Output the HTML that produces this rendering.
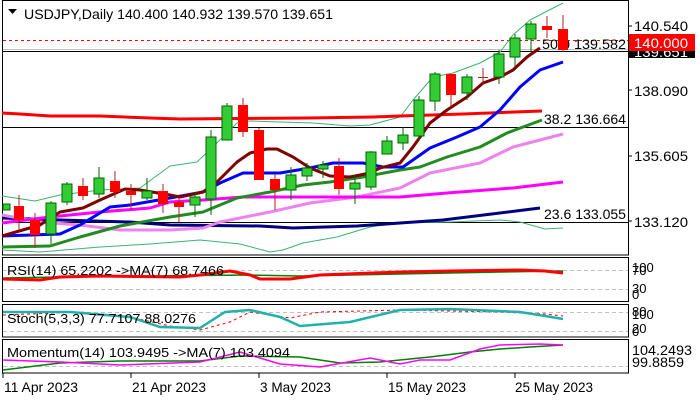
<!DOCTYPE html>
<html><head><meta charset="utf-8"><style>
html,body{margin:0;padding:0;background:#fff;}
svg{display:block;font-family:"Liberation Sans",sans-serif;}
</style></head><body>
<svg width="700" height="400" viewBox="0 0 700 400" xmlns="http://www.w3.org/2000/svg">
<rect width="700" height="400" fill="#fff"/>
<g fill="none" stroke="#000" stroke-width="1">
<rect x="2.5" y="0.5" width="626" height="254.5"/>
<rect x="2.5" y="257.5" width="626" height="44"/>
<rect x="2.5" y="304.5" width="626" height="32.5"/>
<rect x="2.5" y="339.5" width="626" height="33.5"/>
</g>
<path d="M8 9 L17 9 L12.5 14 Z" fill="#000"/>
<text x="24" y="19" font-size="14" fill="#000" textLength="309" lengthAdjust="spacingAndGlyphs">USDJPY,Daily  140.400 140.932 139.570 139.651</text>
<line x1="3" y1="40.5" x2="628" y2="40.5" stroke="#f00" stroke-dasharray="3,3"/>
<line x1="3" y1="49.5" x2="628" y2="49.5" stroke="#c0c0c0"/>
<line x1="3" y1="51.5" x2="628" y2="51.5" stroke="#000"/>
<line x1="3" y1="127.5" x2="628" y2="127.5" stroke="#000"/>
<line x1="3" y1="222.5" x2="628" y2="222.5" stroke="#000"/>
<g font-size="14" fill="#000">
<text x="542" y="49" textLength="84" lengthAdjust="spacingAndGlyphs">50.0 139.582</text>
<text x="544" y="124" textLength="82" lengthAdjust="spacingAndGlyphs">38.2 136.664</text>
<text x="544" y="219" textLength="82" lengthAdjust="spacingAndGlyphs">23.6 133.055</text>
</g>
<g fill="none" stroke-linejoin="round">
<polyline stroke="#3cb371" stroke-width="1" points="2,196 35,201 60,195 100,190 140,188 170,166 197,162 223,137 237,123 250,121 280,122 313,123 350,126 370,125 400,117 413,100 433,77 453,73 480,63 500,52 513,35 530,20 563,3"/>
<polyline stroke="#3cb371" stroke-width="1" points="2,250 40,252 100,247 150,244 200,240 240,244 270,252 283,250 303,243 337,237 370,227 400,223 450,222 500,220 520,222 545,229 563,228"/>
<polyline stroke="#f00" stroke-width="3" points="2,113 20,114 50,116 100,116 150,118 180,119 307,118 373,117 400,116 463,114 542,111"/>
<polyline stroke="#000080" stroke-width="3" points="2,218 60,220 130,222 170,225 260,226 293,228 357,226 400,223 443,220 540,208"/>
<polyline stroke="#ee82ee" stroke-width="3" points="2,215 40,222 80,225 120,230 170,230 203,228 220,222 270,212 310,203 357,197 400,188 430,173 480,163 513,147 563,134"/>
<polyline stroke="#f0f" stroke-width="3" points="2,223 50,217 100,212 150,208 170,202 203,200 243,197 400,197 447,193 513,188 563,182"/>
<polyline stroke="#228b22" stroke-width="3" points="2,247 50,246 80,237 120,226 170,217 203,212 237,198 270,192 303,185 330,182 363,177 400,170 420,167 447,157 480,147 507,133 523,127 542,120"/>
<polyline stroke="#00f" stroke-width="3" points="2,236 60,234 80,225 110,207 130,205 170,198 203,192 220,183 243,173 280,173 310,168 333,163 363,163 383,167 403,167 430,148 457,137 480,127 500,110 520,87 540,70 563,62"/>
<polyline stroke="#800000" stroke-width="3" points="2,236 40,225 60,212 83,208 100,200 125,189 140,190 170,195 180,197 203,192 217,182 237,162 250,153 267,149 277,149 293,157 310,168 330,176 350,177 370,173 380,168 400,163 413,147 430,123 447,110 467,97 483,83 500,77 513,70 527,57 540,48"/>
</g>
<g stroke-width="1">
<g stroke="#006400" fill="#32cd32">
<rect x="3" y="204" width="7" height="6"/>
<line x1="51" y1="201" x2="51" y2="244"/><rect x="46" y="203" width="10" height="31"/>
<line x1="67" y1="182" x2="67" y2="205"/><rect x="62" y="184" width="10" height="18"/>
<line x1="99" y1="167" x2="99" y2="198"/><rect x="94" y="178" width="10" height="16"/>
<line x1="147" y1="178" x2="147" y2="200"/><rect x="142" y="191" width="10" height="7"/>
<line x1="195" y1="192" x2="195" y2="217"/><rect x="190" y="197" width="10" height="8"/>
<line x1="211" y1="130" x2="211" y2="215"/><rect x="206" y="137" width="10" height="62"/>
<line x1="227" y1="103" x2="227" y2="140"/><rect x="222" y="106" width="10" height="34"/>
<line x1="291" y1="167" x2="291" y2="200"/><rect x="286" y="175" width="10" height="15"/>
<line x1="307" y1="163" x2="307" y2="181"/><rect x="302" y="168" width="10" height="8"/>
<line x1="323" y1="161" x2="323" y2="178"/><rect x="318" y="165" width="10" height="4"/>
<line x1="355" y1="175" x2="355" y2="204"/><rect x="350" y="183" width="10" height="6"/>
<line x1="371" y1="151" x2="371" y2="190"/><rect x="366" y="152" width="10" height="35"/>
<line x1="387" y1="136" x2="387" y2="154"/><rect x="382" y="141" width="10" height="13"/>
<line x1="403" y1="127" x2="403" y2="150"/><rect x="398" y="135" width="10" height="8"/>
<line x1="419" y1="96" x2="419" y2="140"/><rect x="414" y="100" width="10" height="36"/>
<line x1="435" y1="72" x2="435" y2="111"/><rect x="430" y="74" width="10" height="27"/>
<line x1="467" y1="74" x2="467" y2="100"/><rect x="462" y="77" width="10" height="16"/>
<line x1="499" y1="50" x2="499" y2="84"/><rect x="494" y="54" width="10" height="23"/>
<line x1="515" y1="34" x2="515" y2="67"/><rect x="510" y="38" width="10" height="19"/>
<line x1="531" y1="21" x2="531" y2="52"/><rect x="526" y="24" width="10" height="15"/>
</g>
<g stroke="#b22222" fill="#f00">
<line x1="19" y1="195" x2="19" y2="230"/><rect x="14" y="206" width="10" height="14" stroke="none"/>
<line x1="35" y1="213" x2="35" y2="248"/><rect x="30" y="220" width="10" height="15" stroke="none"/>
<line x1="83" y1="178" x2="83" y2="200"/><rect x="78" y="186" width="10" height="10" stroke="none"/>
<line x1="115" y1="171" x2="115" y2="198"/><rect x="110" y="181" width="10" height="11" stroke="none"/>
<line x1="131" y1="184" x2="131" y2="210"/><rect x="126" y="191" width="10" height="4" stroke="none"/>
<line x1="163" y1="184" x2="163" y2="213"/><rect x="158" y="191" width="10" height="13" stroke="none"/>
<line x1="179" y1="198" x2="179" y2="222"/><rect x="174" y="202" width="10" height="5" stroke="none"/>
<line x1="243" y1="98" x2="243" y2="137"/><rect x="238" y="105" width="10" height="27" stroke="none"/>
<line x1="259" y1="128" x2="259" y2="180"/><rect x="254" y="130" width="10" height="50" stroke="none"/>
<line x1="275" y1="174" x2="275" y2="210"/><rect x="270" y="179" width="10" height="11" stroke="none"/>
<line x1="339" y1="158" x2="339" y2="195"/><rect x="334" y="166" width="10" height="23" stroke="none"/>
<line x1="451" y1="74" x2="451" y2="107"/><rect x="446" y="74" width="10" height="21" stroke="none"/>
<line x1="483" y1="68" x2="483" y2="85"/><line x1="478" y1="77.5" x2="488" y2="77.5"/>
<line x1="547" y1="16" x2="547" y2="38"/><rect x="542" y="26" width="10" height="4" stroke="none"/>
<line x1="563" y1="15" x2="563" y2="52"/><rect x="558" y="29" width="10" height="21" stroke="none"/>
</g>
</g>
<g font-size="14" fill="#000">
<line x1="628" y1="26" x2="632" y2="26" stroke="#000"/>
<text x="634" y="31" textLength="54" lengthAdjust="spacingAndGlyphs">140.540</text>
<line x1="628" y1="90" x2="632" y2="90" stroke="#000"/>
<text x="634" y="96" textLength="54" lengthAdjust="spacingAndGlyphs">138.090</text>
<line x1="628" y1="156" x2="632" y2="156" stroke="#000"/>
<text x="634" y="161" textLength="54" lengthAdjust="spacingAndGlyphs">135.605</text>
<line x1="628" y1="221" x2="632" y2="221" stroke="#000"/>
<text x="634" y="227" textLength="54" lengthAdjust="spacingAndGlyphs">133.120</text>
</g>
<rect x="629" y="44" width="66" height="14" fill="#000"/>
<text x="634" y="57" font-size="14" fill="#fff" textLength="54" lengthAdjust="spacingAndGlyphs">139.651</text>
<rect x="629" y="34" width="66" height="17" fill="#f00"/>
<text x="634" y="48" font-size="14" fill="#fff" textLength="54" lengthAdjust="spacingAndGlyphs">140.000</text>
<g stroke="#c0c0c0" stroke-dasharray="4,3">
<line x1="3" y1="270.5" x2="628" y2="270.5"/>
<line x1="3" y1="289.5" x2="628" y2="289.5"/>
<line x1="3" y1="312.5" x2="628" y2="312.5"/>
<line x1="3" y1="331.5" x2="628" y2="331.5"/>
<line x1="3" y1="366.5" x2="628" y2="366.5"/>
</g>
<polyline fill="none" stroke="#008000" stroke-width="1.5" points="3,278 60,277 150,276 250,275 300,276 400,274 500,272 563,271"/>
<polyline fill="none" stroke="#f00" stroke-width="3" points="3,279 40,280 60,277 100,276 180,277 200,275 230,271 250,275 260,279 290,279 320,275 400,272 450,271 520,270 545,271 563,273"/>
<text x="7" y="275" font-size="13" fill="#000" textLength="217" lengthAdjust="spacingAndGlyphs">RSI(14) 65.2202  -&gt;MA(7) 68.7466</text>
<polyline fill="none" stroke="#f00" stroke-width="1" stroke-dasharray="3,3" points="3,315 80,312 130,317 170,326 200,330 230,322 250,312 290,318 320,312 400,310 500,312 545,314 563,316"/>
<polyline fill="none" stroke="#20b2aa" stroke-width="2.5" points="3,312 70,312 130,317 160,327 200,328 225,312 250,310 280,317 300,326 350,322 400,310 450,309 520,312 545,316 563,319"/>
<text x="7" y="323" font-size="13" fill="#000" textLength="189" lengthAdjust="spacingAndGlyphs">Stoch(5,3,3) 77.7107 88.0276</text>
<polyline fill="none" stroke="#008000" stroke-width="1.5" points="3,370 60,363 120,361 200,361 240,356 300,357 340,363 380,362 430,357 470,352 500,349 530,347 563,345"/>
<polyline fill="none" stroke="#f0f" stroke-width="1.5" points="3,360 60,362 120,365 200,362 240,352 280,364 320,367 370,358 400,364 420,360 450,360 480,349 500,345 540,344 563,345"/>
<text x="7" y="357" font-size="13" fill="#000" textLength="283" lengthAdjust="spacingAndGlyphs">Momentum(14) 103.9495  -&gt;MA(7) 103.4094</text>
<g font-size="13" fill="#000">
<text x="632" y="272">100</text><text x="632" y="275">70</text>
<text x="632" y="293">30</text><text x="632" y="299">0</text>
<text x="632" y="316">80</text><text x="632" y="319">100</text>
<text x="632" y="333">20</text><text x="632" y="336">0</text>
<text x="632" y="355" font-size="14" textLength="60" lengthAdjust="spacingAndGlyphs">104.2493</text>
<text x="632" y="367" font-size="14" textLength="52" lengthAdjust="spacingAndGlyphs">99.8859</text>
</g>
<g stroke="#000">
<line x1="3" y1="373" x2="3" y2="378"/><line x1="131" y1="373" x2="131" y2="378"/>
<line x1="259" y1="373" x2="259" y2="378"/><line x1="387" y1="373" x2="387" y2="378"/>
<line x1="515" y1="373" x2="515" y2="378"/>
</g>
<g font-size="14" fill="#000">
<text x="4" y="392" textLength="74" lengthAdjust="spacingAndGlyphs">11 Apr 2023</text>
<text x="132" y="392" textLength="74" lengthAdjust="spacingAndGlyphs">21 Apr 2023</text>
<text x="260" y="392" textLength="71" lengthAdjust="spacingAndGlyphs">3 May 2023</text>
<text x="388" y="392" textLength="78" lengthAdjust="spacingAndGlyphs">15 May 2023</text>
<text x="515" y="392" textLength="78" lengthAdjust="spacingAndGlyphs">25 May 2023</text>
</g>
</svg>
</body></html>
